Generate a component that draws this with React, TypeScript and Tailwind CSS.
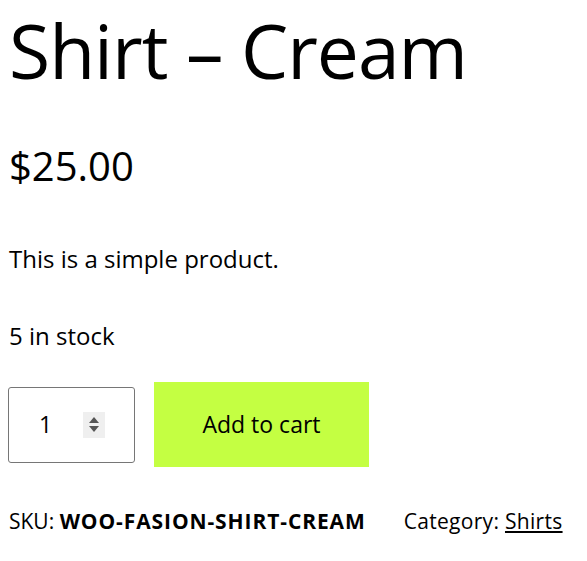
import React from "react";

export default function App() {
  return (
    <div className="w-[587px] h-[561px] bg-white text-black overflow-hidden pl-[9px]" style={{ fontFamily: '"Open Sans", "Noto Sans", sans-serif' }}>
      <h1 className="text-[75px] leading-[100px] font-normal m-0 tracking-[-1px]">Shirt – Cream</h1>
      <div className="text-[40px] leading-[60px] mt-[36px]">$25.00</div>
      <p className="text-[24px] leading-[34px] mt-[46px]">This is a simple product.</p>
      <p className="text-[24px] leading-[34px] mt-[43px]">5 in stock</p>
      <div className="flex items-center mt-[29px] -ml-[1px]">
        <div className="w-[127px] h-[76px] border border-[#767676] rounded-[3px] flex items-center pl-[30px]">
          <span className="text-[23px] w-[44px]">1</span>
          <div className="w-[22px] h-[26px] bg-[#efefef] flex flex-col items-center justify-center gap-[3px]">
            <svg width="10" height="6" viewBox="0 0 10 6"><path d="M0 6 L5 0 L10 6 Z" fill="#555" /></svg>
            <svg width="10" height="6" viewBox="0 0 10 6"><path d="M0 0 L5 6 L10 0 Z" fill="#555" /></svg>
          </div>
        </div>
        <button className="ml-[19px] w-[215px] h-[85px] bg-[#c4ff42] text-[23px] flex items-center justify-center">Add to cart</button>
      </div>
      <div className="flex items-baseline mt-[39px] text-[21px]">
        <span>SKU: <b className="font-bold tracking-[0.9px]">WOO-FASION-SHIRT-CREAM</b></span>
        <span className="ml-[38px] tracking-[0.3px]">Category: <a className="underline">Shirts</a></span>
      </div>
    </div>
  );
}
